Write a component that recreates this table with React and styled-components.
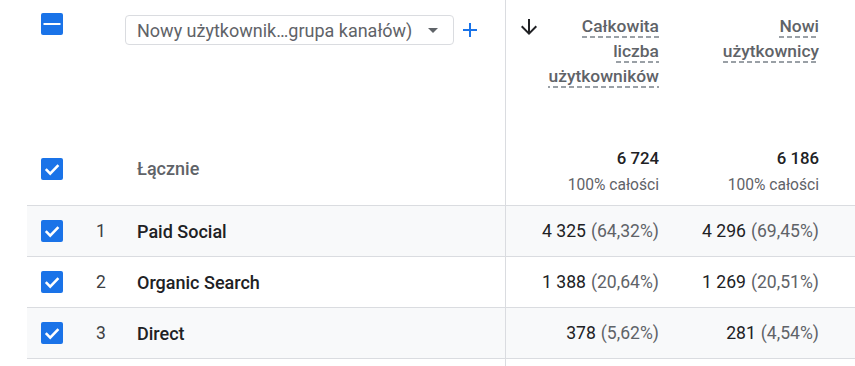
import React from "react";
import styled, { createGlobalStyle } from "styled-components";

const GlobalStyle = createGlobalStyle`
  html, body {
    margin: 0;
    padding: 0;
    background: #fff;
  }
  body {
    font-family: Roboto, "Noto Sans", Arial, sans-serif;
    color: #202124;
  }
`;

const Table = styled.div`
  display: flex;
  flex-direction: column;
  height: 100vh;
  overflow: hidden;
`;

const Row = styled.div`
  display: grid;
  grid-template-columns: 53px 42px 383px 170px 160px 1fr;
  margin-left: 27px;
  height: ${(p) => p.$h}px;
  flex: ${(p) => (p.$grow ? "1" : "none")};
  box-sizing: border-box;
  background: ${(p) => (p.$shade ? "#f8f9fa" : "#fff")};
  border-bottom: ${(p) => (p.$line ? "1px solid #dadce0" : "none")};
`;

const Cell = styled.div`
  display: flex;
  align-items: ${(p) => (p.$top ? "flex-start" : "center")};
  padding-top: ${(p) => (p.$top ? "13px" : "0")};
  box-sizing: border-box;
`;

const CheckCell = styled(Cell)`
  padding-left: 14px;
`;

const IndexCell = styled(Cell)`
  justify-content: center;
  font-size: 17.5px;
  color: #3c4043;
`;

const NameCell = styled(Cell)`
  padding-left: 15px;
  font-size: 18px;
  font-weight: 500;
  color: ${(p) => (p.$muted ? "#5f6368" : "#202124")};
`;

const MetricCell = styled(Cell)`
  justify-content: ${(p) => (p.$top ? "space-between" : p.$stack ? "center" : "flex-end")};
  flex-direction: ${(p) => (p.$stack ? "column" : "row")};
  align-items: ${(p) => (p.$stack ? "flex-end" : p.$top ? "flex-start" : "center")};
  padding-right: 16px;
  padding-left: 11px;
  padding-top: ${(p) => (p.$top ? "14px" : "0")};
  border-left: ${(p) => (p.$divider ? "1px solid #dadce0" : "none")};
  font-size: 17.6px;
  white-space: nowrap;
`;

const Box = styled.span`
  width: 22px;
  height: 22px;
  border-radius: 2px;
  background: #1a73e8;
  display: inline-flex;
  align-items: center;
  justify-content: center;
`;

const Select = styled.div`
  margin-left: 3px;
  margin-top: 2px;
  width: 329px;
  height: 30px;
  box-sizing: border-box;
  border: 1px solid #dadce0;
  border-radius: 4px;
  display: flex;
  align-items: center;
  justify-content: space-between;
  padding: 0 15px 0 11px;
  font-size: 18px;
  color: #5f6368;
  white-space: nowrap;
`;

const AddButton = styled.span`
  display: inline-flex;
  margin-left: 4px;
  margin-top: 5px;
`;

const HeadTitle = styled.div`
  max-width: 120px;
  text-align: right;
  font-size: 17.4px;
  font-weight: 500;
  line-height: 25px;
  color: #5f6368;
  white-space: normal;
`;

const Dashed = styled.span`
  padding-bottom: 2px;
  background-image: linear-gradient(to right, #9aa0a6 60%, transparent 60%);
  background-size: 8px 2px;
  background-repeat: repeat-x;
  background-position: 0 100%;
`;

const SortIcon = styled.span`
  display: inline-flex;
  margin-top: 1px;
`;

const TotalValue = styled.div`
  font-size: 16.8px;
  font-weight: 500;
  color: #202124;
  line-height: 20px;
  margin-top: 6px;
`;

const TotalShare = styled.div`
  font-size: 15.6px;
  color: #5f6368;
  line-height: 20px;
  margin-top: 7px;
`;

const Share = styled.span`
  color: #5f6368;
  margin-left: 5px;
`;

const CheckBox = ({ minus }) => (
  <Box>
    <svg width="22" height="22" viewBox="0 0 22 22">
      {minus ? (
        <rect x="2.5" y="10" width="17" height="2" fill="#fff" />
      ) : (
        <polyline
          points="4.8,11.2 9.2,15.6 17.4,7.2"
          fill="none"
          stroke="#fff"
          strokeWidth="2.6"
        />
      )}
    </svg>
  </Box>
);

const rows = [
  { n: 1, name: "Paid Social", a: "4 325", ap: "(64,32%)", b: "4 296", bp: "(69,45%)" },
  { n: 2, name: "Organic Search", a: "1 388", ap: "(20,64%)", b: "1 269", bp: "(20,51%)" },
  { n: 3, name: "Direct", a: "378", ap: "(5,62%)", b: "281", bp: "(4,54%)" },
];

const App = () => {
  return (
    <>
      <GlobalStyle />
      <Table>
        <Row $h={132}>
          <CheckCell $top>
            <CheckBox minus />
          </CheckCell>
          <Cell $top />
          <Cell $top>
            <Select>
              <span>Nowy użytkownik…grupa kanałów)</span>
              <svg width="10" height="5" viewBox="0 0 10 5">
                <path d="M0 0h10L5 5z" fill="#5f6368" />
              </svg>
            </Select>
            <AddButton>
              <svg width="24" height="24" viewBox="0 0 24 24">
                <path d="M19 13h-6v6h-2v-6H5v-2h6V5h2v6h6v2z" fill="#1a73e8" />
              </svg>
            </AddButton>
          </Cell>
          <MetricCell $top $divider>
            <SortIcon>
              <svg width="24" height="24" viewBox="0 0 24 24">
                <path
                  d="M20 12l-1.41-1.41L13 16.17V4h-2v12.17l-5.58-5.59L4 12l8 8 8-8z"
                  fill="#202124"
                />
              </svg>
            </SortIcon>
            <HeadTitle>
              <Dashed>Całkowita liczba użytkowników</Dashed>
            </HeadTitle>
          </MetricCell>
          <MetricCell $top>
            <span />
            <HeadTitle>
              <Dashed>Nowi użytkownicy</Dashed>
            </HeadTitle>
          </MetricCell>
          <Cell />
        </Row>

        <Row $h={74} $line>
          <CheckCell>
            <CheckBox />
          </CheckCell>
          <Cell />
          <NameCell $muted>Łącznie</NameCell>
          <MetricCell $stack $divider>
            <TotalValue>6 724</TotalValue>
            <TotalShare>100% całości</TotalShare>
          </MetricCell>
          <MetricCell $stack>
            <TotalValue>6 186</TotalValue>
            <TotalShare>100% całości</TotalShare>
          </MetricCell>
          <Cell />
        </Row>

        {rows.map((r, i) => (
          <Row key={r.n} $h={51} $line $shade={i % 2 === 0}>
            <CheckCell>
              <CheckBox />
            </CheckCell>
            <IndexCell>{r.n}</IndexCell>
            <NameCell>{r.name}</NameCell>
            <MetricCell $divider>
              {r.a}
              <Share>{r.ap}</Share>
            </MetricCell>
            <MetricCell>
              {r.b}
              <Share>{r.bp}</Share>
            </MetricCell>
            <Cell />
          </Row>
        ))}

        <Row $grow>
          <Cell />
          <Cell />
          <Cell />
          <MetricCell $divider />
          <MetricCell />
          <Cell />
        </Row>
      </Table>
    </>
  );
};

export default App;
